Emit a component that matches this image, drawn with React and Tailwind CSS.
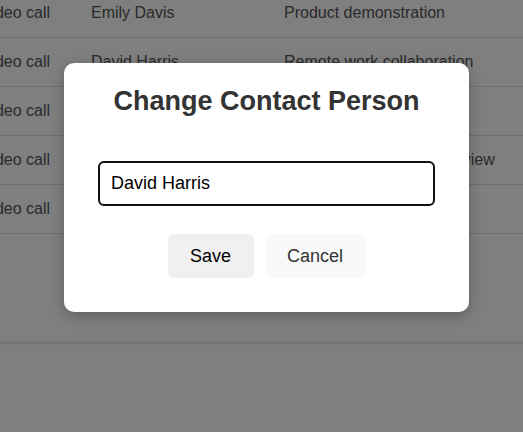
import React, { useEffect, useRef } from 'react';

const meetings = [
  { type: 'Video call', contact: 'Emily Davis', topic: 'Product demonstration' },
  { type: 'Video call', contact: 'David Harris', topic: 'Remote work collaboration' },
  { type: 'Video call', contact: 'Sarah Miller', topic: 'Budget planning' },
  { type: 'Video call', contact: 'Michael Brown', topic: 'Quarterly performance review' },
  { type: 'Video call', contact: 'Jessica Lee', topic: 'Onboarding session' },
];

const App = () => {
  const inputRef = useRef(null);

  useEffect(() => {
    const el = inputRef.current;
    if (el) {
      el.focus();
      const len = el.value.length;
      el.setSelectionRange(len, len);
    }
  }, []);

  return (
    <div className="relative h-[432px] w-[523px] overflow-hidden bg-white font-['Liberation_Sans',Arial,sans-serif]">
      {/* Table behind the modal */}
      <div className="-ml-[34px] -mt-[11px] w-[760px] bg-white shadow-[0_1px_3px_rgba(0,0,0,0.18)]">
        {meetings.map((m, i) => (
          <div
            key={i}
            className="grid grid-cols-[110px_193px_1fr] border-b border-[#dddddd] text-[16px] leading-[18px] text-[#555555]"
          >
            <div className="px-[15px] py-[15px]">{m.type}</div>
            <div className="px-[15px] py-[15px]">{m.contact}</div>
            <div className="px-[15px] py-[15px]">{m.topic}</div>
          </div>
        ))}
        <div className="h-[108px]"></div>
      </div>

      {/* Overlay */}
      <div className="absolute inset-0 bg-black/50">
        <div className="absolute left-[64px] top-[63px] h-[249px] w-[405px] rounded-[10px] bg-white pt-[23px] shadow-[0_4px_14px_rgba(0,0,0,0.25)]">
          <h2 className="text-center text-[27px] font-bold leading-[31px] text-[#333333]">
            Change Contact Person
          </h2>
          <input
            ref={inputRef}
            type="text"
            defaultValue="David Harris"
            className="mx-auto mt-[44px] block h-[45px] w-[337px] rounded-[6px] border-2 border-[#111111] px-[11px] text-[18px] text-black caret-black outline-none"
          />
          <div className="mt-[28px] flex justify-center gap-[11px]">
            <button className="h-[44px] w-[86px] rounded-[6px] bg-[#f0f0f0] text-[18px] text-black">
              Save
            </button>
            <button className="h-[44px] w-[101px] rounded-[6px] bg-[#f8f9fa] text-[18px] text-[#333333]">
              Cancel
            </button>
          </div>
        </div>
      </div>
    </div>
  );
};

export default App;
